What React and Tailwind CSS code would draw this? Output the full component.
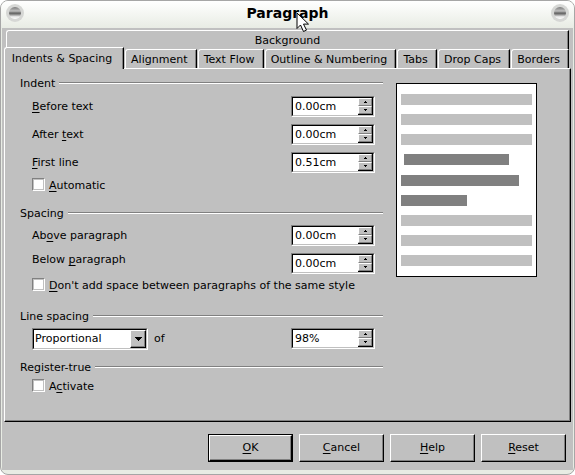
import { useState } from "react";

const TABS = ["Alignment", "Text Flow", "Outline & Numbering", "Tabs", "Drop Caps", "Borders"];

// The edited paragraph is the dark block between its two neighbours
const PREVIEW_BLOCKS = [
  ["bg-[#c0c0c0] w-full", "bg-[#c0c0c0] w-full", "bg-[#c0c0c0] w-full", "bg-[#808080] w-[105px] ml-[3px]"],
  [
    "bg-[#808080] w-[118px]",
    "bg-[#808080] w-[66px]",
    "bg-[#c0c0c0] w-full",
    "bg-[#c0c0c0] w-full",
    "bg-[#c0c0c0] w-full",
  ],
];

const SUNKEN =
  "border border-t-[#808080] border-l-[#808080] border-b-white border-r-white bg-white";
const SUNKEN_INNER =
  "flex h-full border border-t-black border-l-black border-b-[#c0c0c0] border-r-[#c0c0c0]";
const RAISED =
  "border border-t-white border-l-white border-b-black border-r-black bg-[#c0c0c0] shadow-[inset_-1px_-1px_0_#808080]";
const SPIN_BUTTON =
  "flex flex-1 items-center justify-center border border-t-white border-l-white border-b-[#808080] border-r-[#808080] bg-[#c0c0c0]";
const TAB =
  "rounded-tl-[3px] border-t border-l border-r border-t-white border-l-white border-r-black shadow-[inset_-1px_0_0_#808080]";

// Underlines the accelerator letter, marked with "_" in front of it
function Mnemonic({ text }) {
  const i = text.indexOf("_");
  if (i < 0) return text;
  return (
    <>
      {text.slice(0, i)}
      <span className="underline underline-offset-2">{text[i + 1]}</span>
      {text.slice(i + 2)}
    </>
  );
}

function TitleButton({ label }) {
  return (
    <button type="button" aria-label={label} className="h-[18px] w-[18px]">
      <svg viewBox="0 0 18 18" className="h-full w-full">
        <defs>
          <linearGradient id={`ball-${label}`} x1="0" y1="0" x2="0" y2="1">
            <stop offset="0" stopColor="#7a7a7a" />
            <stop offset="0.3" stopColor="#b8b8b8" />
            <stop offset="0.42" stopColor="#a0a0a0" />
            <stop offset="0.5" stopColor="#5a5a5a" />
            <stop offset="0.62" stopColor="#8a8a8a" />
            <stop offset="0.8" stopColor="#e6e6e6" />
            <stop offset="1" stopColor="#fff" />
          </linearGradient>
        </defs>
        <circle cx="9" cy="9" r="9" fill="#d6d7d5" />
        <circle cx="9" cy="9" r="6" fill={`url(#ball-${label})`} />
      </svg>
    </button>
  );
}

function GroupTitle({ children }) {
  return (
    <h2 className="flex h-[14px] items-center gap-1">
      <span className="pt-[2px]">{children}</span>
      <span className="h-[2px] flex-1 border-t border-b border-t-[#808080] border-b-white" />
    </h2>
  );
}

function SpinField({ id, initial }) {
  const [value, setValue] = useState(initial);

  const step = (dir) => {
    const unit = value.replace(/[\d.]/g, "");
    const num = parseFloat(value) || 0;
    setValue(unit === "%" ? `${num + dir}%` : `${(num + dir * 0.1).toFixed(2)}${unit}`);
  };

  return (
    <div className={`h-[21px] w-[84px] shrink-0 ${SUNKEN}`}>
      <div className={SUNKEN_INNER}>
        <input
          id={id}
          value={value}
          onChange={(e) => setValue(e.target.value)}
          className="min-w-0 flex-1 pl-[2px] outline-none"
        />
        <div className="flex w-[15px] flex-col border-r border-b border-black">
          <button type="button" aria-label="Increase" onClick={() => step(1)} className={SPIN_BUTTON}>
            <svg viewBox="0 0 3 2" className="h-[2px] w-[3px]" shapeRendering="crispEdges">
              <path d="M1 0h1v1h1v1H0V1h1z" />
            </svg>
          </button>
          <button type="button" aria-label="Decrease" onClick={() => step(-1)} className={SPIN_BUTTON}>
            <svg viewBox="0 0 3 2" className="h-[2px] w-[3px]" shapeRendering="crispEdges">
              <path d="M0 0h3v1H2v1H1V1H0z" />
            </svg>
          </button>
        </div>
      </div>
    </div>
  );
}

function FieldRow({ id, label, initial, align = "items-center" }) {
  return (
    <div className={`flex justify-between pr-2 pl-3 ${align}`}>
      <label htmlFor={id}>
        <Mnemonic text={label} />
      </label>
      <SpinField id={id} initial={initial} />
    </div>
  );
}

function CheckRow({ label }) {
  return (
    <label className="flex h-[14px] items-start gap-1 pl-3">
      <input
        type="checkbox"
        className="h-[13px] w-[13px] appearance-none border border-t-[#808080] border-l-[#808080] border-b-white border-r-white bg-white shadow-[inset_0_0_0_1px_#c0c0c0] checked:bg-black"
      />
      <span className="pt-px">
        <Mnemonic text={label} />
      </span>
    </label>
  );
}

function DialogButton({ label, primary = false }) {
  return (
    <button
      type="button"
      className={primary ? "h-7 w-[85px] border border-black" : "h-7 w-[85px]"}
    >
      <span className={`flex h-full items-center justify-center ${RAISED}`}>
        <span>
          <Mnemonic text={label} />
        </span>
      </span>
    </button>
  );
}

function Preview() {
  return (
    <div className="flex h-[194px] w-[141px] shrink-0 flex-col gap-[10px] border border-black bg-white px-1 pt-[10px]">
      {PREVIEW_BLOCKS.map((lines, i) => (
        <div key={i} className="flex flex-col gap-[9px]">
          {lines.map((line, j) => (
            <div key={j} className={`h-[11px] ${line}`} />
          ))}
        </div>
      ))}
    </div>
  );
}

export default function App() {
  return (
    <main className="relative w-full overflow-hidden rounded-lg border border-[#a6a6a6] bg-[#e8ece4] pb-1 font-['DejaVu_Sans',sans-serif] text-[11px] leading-[14px] text-black">
      <header className="flex h-[27px] items-center justify-between bg-linear-to-b from-white to-[#e8ece4] px-[5px] pb-[3px]">
        <TitleButton label="Menu" />
        <h1 className="text-[14px] font-bold">Paragraph</h1>
        <TitleButton label="Close" />
      </header>

      <div className="mx-px bg-[#c0c0c0] px-[2px] pt-[2px] pb-2">
        <nav role="tablist">
          <div className="flex px-[2px]">
            <button
              type="button"
              role="tab"
              aria-selected="false"
              className={`h-[19px] flex-1 pt-[2px] ${TAB}`}
            >
              Background
            </button>
          </div>
          <div className="flex items-end gap-px pr-[2px]">
            <button
              type="button"
              role="tab"
              aria-selected="true"
              className={`relative -mt-[2px] -mb-px h-[22px] w-[120px] bg-[#c0c0c0] pr-1 ${TAB}`}
            >
              Indents & Spacing
            </button>
            {TABS.map((tab) => (
              <button
                key={tab}
                type="button"
                role="tab"
                aria-selected="false"
                className={`h-[19px] flex-auto pt-[2px] pr-[5px] pl-[2px] ${TAB}`}
              >
                {tab}
              </button>
            ))}
          </div>
        </nav>

        <section className="flex border border-t-white border-l-white border-b-black border-r-black px-[15px] pt-[7px] pb-7 shadow-[inset_-1px_-1px_0_#808080]">
          <div className="min-w-0 max-w-[363px] flex-1">
            <GroupTitle>Indent</GroupTitle>
            <div className="mt-[6px] flex flex-col gap-[7px]">
              <FieldRow id="before" label="_Before text" initial="0.00cm" />
              <FieldRow id="after" label="After _text" initial="0.00cm" />
              <FieldRow id="first" label="_First line" initial="0.51cm" />
            </div>
            <div className="mt-[5px] mb-[14px]">
              <CheckRow label="_Automatic" />
            </div>

            <GroupTitle>Spacing</GroupTitle>
            <div className="mt-[5px] flex flex-col gap-[7px]">
              <FieldRow id="above" label="Ab_ove paragraph" initial="0.00cm" />
              <FieldRow id="below" label="Below _paragraph" initial="0.00cm" align="items-start" />
            </div>
            <div className="mt-1 mb-[17px]">
              <CheckRow label="_Don't add space between paragraphs of the same style" />
            </div>

            <GroupTitle>Line spacing</GroupTitle>
            <div className="mt-[5px] mb-[10px] flex items-start pr-2 pl-3">
              <div className={`h-[22px] w-[116px] ${SUNKEN}`}>
                <div className={SUNKEN_INNER}>
                  <select
                    aria-label="Line spacing"
                    defaultValue="Proportional"
                    className="min-w-0 flex-1 appearance-none pl-px outline-none"
                  >
                    <option>Single</option>
                    <option>1.5 lines</option>
                    <option>Double</option>
                    <option>Proportional</option>
                  </select>
                  <span className={`pointer-events-none flex w-4 items-center justify-center ${RAISED}`}>
                    <svg viewBox="0 0 7 4" className="h-1 w-[7px]" shapeRendering="crispEdges">
                      <path d="M0 0h7v1H6v1H5v1H4v1H3V3H2V2H1V1H0z" />
                    </svg>
                  </span>
                </div>
              </div>
              <label htmlFor="amount" className="flex-1 self-center pl-[6px]">
                of
              </label>
              <SpinField id="amount" initial="98%" />
            </div>

            <GroupTitle>Register-true</GroupTitle>
            <div className="mt-[5px]">
              <CheckRow label="A_ctivate" />
            </div>
          </div>

          <div className="mt-[7px] ml-[13px]">
            <Preview />
          </div>
        </section>

        <footer className="mt-3 flex justify-end gap-[6px] pr-[5px]">
          <DialogButton label="_OK" primary />
          <DialogButton label="_Cancel" />
          <DialogButton label="_Help" />
          <DialogButton label="_Reset" />
        </footer>
      </div>

      {/* mouse pointer */}
      <svg viewBox="0 0 13 20" className="pointer-events-none absolute top-[11px] left-[295px] h-5 w-[13px]">
        <path d="M1 1v15.500l3.500-3.500 3 6.500 3-1.400-3-6h5z" fill="#fff" stroke="#000" />
      </svg>
    </main>
  );
}
